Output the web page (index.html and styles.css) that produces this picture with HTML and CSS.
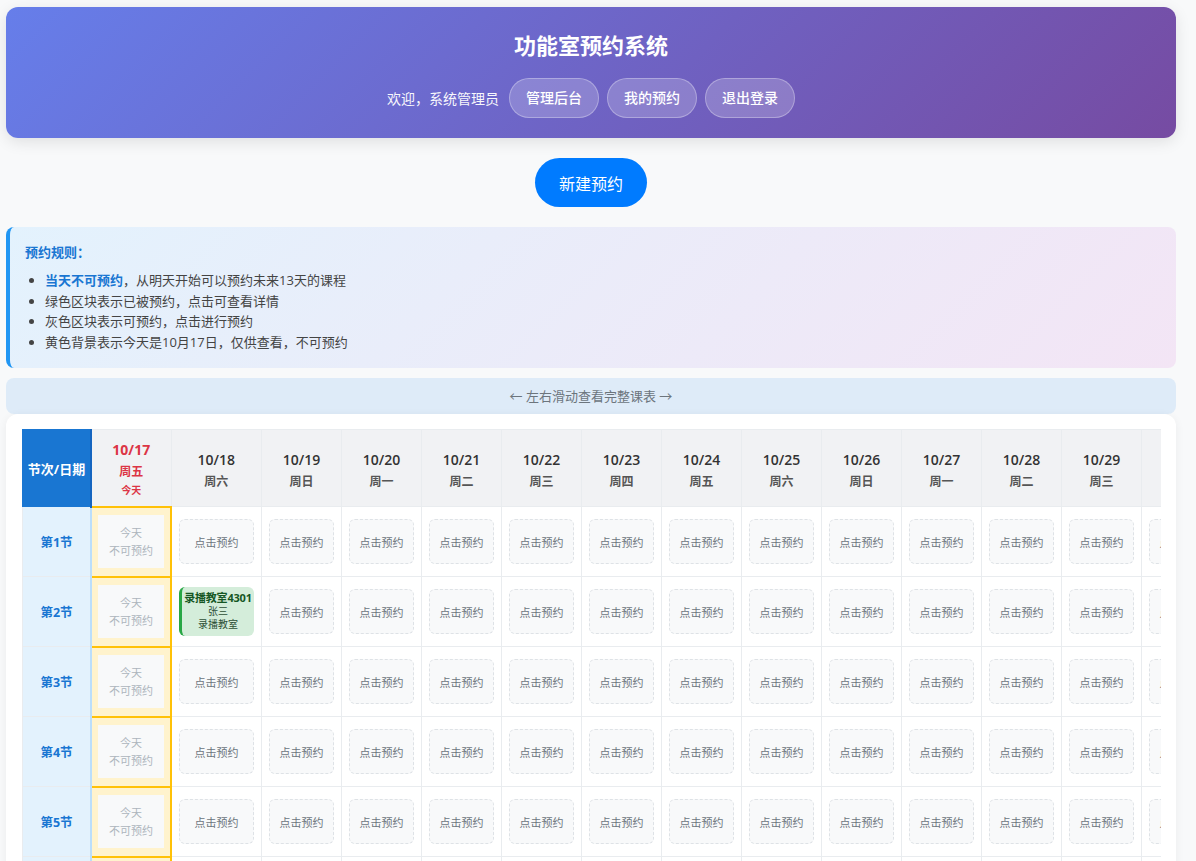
FILE: index.html
```html
<!DOCTYPE html>
<html lang="zh-CN">
<head>
<meta charset="utf-8">
<title>功能室预约系统</title>
<link rel="stylesheet" href="styles.css">
</head>
<body>
<div class="page">
  <header class="hero">
    <h1 class="hero-title">功能室预约系统</h1>
    <nav class="hero-nav">
      <span class="welcome">欢迎，系统管理员</span>
      <a class="pill">管理后台</a>
      <a class="pill">我的预约</a>
      <a class="pill">退出登录</a>
    </nav>
  </header>

  <div class="actions">
    <button class="btn-new">新建预约</button>
  </div>

  <section class="rules">
    <div class="rules-title">预约规则：</div>
    <ul class="rules-list">
      <li><strong class="hl">当天不可预约</strong>，从明天开始可以预约未来13天的课程</li>
      <li>绿色区块表示已被预约，点击可查看详情</li>
      <li>灰色区块表示可预约，点击进行预约</li>
      <li>黄色背景表示今天是10月17日，仅供查看，不可预约</li>
    </ul>
  </section>

  <div class="hint">← 左右滑动查看完整课表 →</div>

  <section class="card">
    <div class="scroller">
      <table class="sched">
        <thead>
          <tr>
            <th class="corner"><div class="corner-in">节次/日期</div></th>
            <th class="day today-h"><div class="d">10/17</div><div class="w">周五</div><div class="t">今天</div></th>
            <th class="day"><div class="d">10/18</div><div class="w">周六</div></th>
            <th class="day"><div class="d">10/19</div><div class="w">周日</div></th>
            <th class="day"><div class="d">10/20</div><div class="w">周一</div></th>
            <th class="day"><div class="d">10/21</div><div class="w">周二</div></th>
            <th class="day"><div class="d">10/22</div><div class="w">周三</div></th>
            <th class="day"><div class="d">10/23</div><div class="w">周四</div></th>
            <th class="day"><div class="d">10/24</div><div class="w">周五</div></th>
            <th class="day"><div class="d">10/25</div><div class="w">周六</div></th>
            <th class="day"><div class="d">10/26</div><div class="w">周日</div></th>
            <th class="day"><div class="d">10/27</div><div class="w">周一</div></th>
            <th class="day"><div class="d">10/28</div><div class="w">周二</div></th>
            <th class="day"><div class="d">10/29</div><div class="w">周三</div></th>
            <th class="day"><div class="d">10/30</div><div class="w">周四</div></th>
          </tr>
        </thead>
        <tbody id="rows"></tbody>
      </table>
    </div>
  </section>
</div>
<script src="app.js"></script>
</body>
</html>
```

FILE: app.js
```js
(function () {
  var tbody = document.getElementById('rows');
  var html = '';
  for (var p = 1; p <= 8; p++) {
    html += '<tr><th class="period">第' + p + '节</th>';
    html += '<td class="today"><div class="locked">今天<br>不可预约</div></td>';
    for (var d = 0; d < 13; d++) {
      if (p === 2 && d === 0) {
        html += '<td class="cell"><div class="booked"><div class="b-room">录播教室4301</div><div class="b-sub">张三</div><div class="b-sub">录播教室</div></div></td>';
      } else {
        html += '<td class="cell"><div class="slot">点击预约</div></td>';
      }
    }
    html += '</tr>';
  }
  tbody.innerHTML = html;
})();
```

FILE: styles.css
```css
* { box-sizing: border-box; }
html, body { margin: 0; padding: 0; }
body {
  background: #f8f9fa;
  font-family: "Segoe UI", "Open Sans", "Noto Sans CJK SC", sans-serif;
  color: #333;
}
.page {
  width: 1170px;
  margin: 7px 0 0 6px;
  display: flex;
  flex-direction: column;
}

/* header */
.hero {
  background: linear-gradient(135deg, #667eea 0%, #764ba2 100%);
  border-radius: 12px;
  padding: 23px 20px 20px;
  color: #fff;
  box-shadow: 0 4px 15px rgba(0, 0, 0, 0.1);
  text-align: center;
}
.hero-title {
  margin: 0 0 18px;
  font-size: 22px;
  line-height: 30px;
  font-weight: 700;
}
.hero-nav {
  display: flex;
  justify-content: center;
  align-items: center;
  gap: 8px;
}
.welcome {
  font-size: 14px;
  margin-right: 2px;
  opacity: 0.95;
}
.pill {
  display: inline-block;
  height: 40px;
  line-height: 38px;
  padding: 0 16px;
  border-radius: 20px;
  background: rgba(255, 255, 255, 0.2);
  border: 1px solid rgba(255, 255, 255, 0.3);
  color: #fff;
  font-size: 14px;
  font-weight: 500;
}

/* new button */
.actions {
  display: flex;
  justify-content: center;
  padding: 20px 0;
}
.btn-new {
  height: 49px;
  padding: 0 24px;
  border: none;
  border-radius: 25px;
  background: #007bff;
  color: #fff;
  font-family: inherit;
  font-size: 16px;
}

/* rules */
.rules {
  background: linear-gradient(135deg, #e3f2fd 0%, #f3e5f5 100%);
  border-left: 4px solid #2196f3;
  border-radius: 8px;
  padding: 14px 15px 16px;
}
.rules-title {
  color: #1976d2;
  font-weight: 700;
  font-size: 13px;
  line-height: 22px;
}
.rules-list {
  margin: 7px 0 0;
  padding-left: 20px;
  font-size: 13px;
  line-height: 20.5px;
  color: #444;
}
.hl { color: #1976d2; font-weight: 700; }

/* hint */
.hint {
  margin-top: 10px;
  height: 36px;
  line-height: 36px;
  border-radius: 8px;
  background: #deebf8;
  color: #6c757d;
  font-size: 13px;
  text-align: center;
}

/* card / table */
.card {
  background: #fff;
  border-radius: 12px;
  padding: 15px 15px 15px 16px;
  box-shadow: 0 2px 10px rgba(0, 0, 0, 0.06);
}
.scroller {
  overflow-x: auto;
  overflow-y: hidden;
}
.sched {
  border-collapse: collapse;
  font-size: 11px;
}
.sched th, .sched td {
  border: 1px solid #e9ecef;
  text-align: center;
  vertical-align: middle;
  white-space: nowrap;
}
.sched thead th {
  height: 77px;
  background: #f1f2f4;
  padding: 6px 6px 0;
}
.corner {
  background: #1976d2 !important;
  color: #fff;
  font-size: 13px;
  font-weight: 700;
  border-color: #1976d2 !important;
  border-right: 2px solid #1565c0 !important;
  padding: 0 !important;
}
.corner-in { width: 67px; }
.d {
  font-size: 14px;
  font-weight: 600;
  color: #333;
  line-height: 20px;
}
.w {
  font-size: 12px;
  font-weight: 600;
  color: #555;
  line-height: 20px;
  margin-top: 2px;
}
.today-h { padding-top: 4px !important; }
.today-h .d { color: #dc3545; font-weight: 700; line-height: 20px; }
.today-h .w { color: #dc3545; line-height: 18px; margin-top: 3px; }
.today-h .t { color: #dc3545; font-size: 10px; font-weight: 700; line-height: 18px; }

.period {
  height: 70px;
  background: #e3f2fd;
  color: #1976d2;
  font-size: 12.5px;
  font-weight: 700;
  border-right: 2px solid #bbdefb !important;
}
.today {
  background: #fff3cd;
  border: 2px solid #ffc107 !important;
  padding: 0 6px;
  height: 70px;
}
.locked {
  width: 66px;
  margin: 0 auto;
  background: #f8f9fa;
  color: #adb5bd;
  font-size: 11px;
  line-height: 18px;
  padding: 9px 0 8px;
}
.cell {
  height: 70px;
  padding: 0 7px;
  background: #fff;
}
.slot {
  height: 45px;
  min-width: 65px;
  display: flex;
  align-items: center;
  justify-content: center;
  border: 1px dashed #dee2e6;
  border-radius: 6px;
  background: #f8f9fa;
  color: #6c757d;
  font-size: 11px;
}
.booked {
  width: 75px;
  background: #d4edda;
  border-left: 3px solid #28a745;
  border-radius: 6px;
  padding: 4px 0 5px;
  color: #155724;
  line-height: 13px;
}
.b-room { font-size: 11px; font-weight: 700; line-height: 14px; letter-spacing: -0.2px; }
.b-sub { font-size: 10px; color: #2d4f36; }
```
